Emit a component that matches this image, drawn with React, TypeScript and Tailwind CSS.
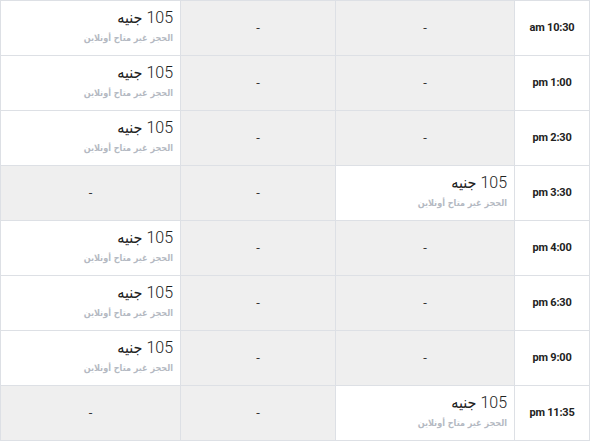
const rows: { time: string; avail: number }[] = [
  { time: 'am 10:30', avail: 0 },
  { time: 'pm 1:00', avail: 0 },
  { time: 'pm 2:30', avail: 0 },
  { time: 'pm 3:30', avail: 2 },
  { time: 'pm 4:00', avail: 0 },
  { time: 'pm 6:30', avail: 0 },
  { time: 'pm 9:00', avail: 0 },
  { time: 'pm 11:35', avail: 2 },
];

function PriceCell() {
  return (
    <td className="bg-white border border-[#dde0e5] align-top pt-[6px] pr-[7px] text-right">
      <div dir="rtl" className="text-[16px] leading-[22px] font-light text-[#222] [font-family:Roboto,'DejaVu_Sans_Condensed',sans-serif]">
        105 جنيه
      </div>
      <div dir="rtl" className="text-[9px] leading-[14px] mt-[2px] font-bold text-[#b4b9c2] [font-family:'DejaVu_Sans_Condensed',sans-serif]">
        الحجز غير متاح أونلاين
      </div>
    </td>
  );
}

function EmptyCell() {
  return (
    <td className="bg-[#efefef] border border-[#dde0e5] text-center align-middle text-[13px] text-[#333]">
      -
    </td>
  );
}

export default function App() {
  return (
    <div className="w-[590px] h-[444px] bg-white" style={{ fontFamily: 'Roboto, "DejaVu Sans", sans-serif' }}>
      <table className="border-collapse table-fixed w-[589px]">
        <colgroup>
          <col className="w-[180px]" />
          <col className="w-[155px]" />
          <col className="w-[179px]" />
          <col className="w-[75px]" />
        </colgroup>
        <tbody>
          {rows.map((r) => (
            <tr key={r.time} className="h-[55px]">
              {[0, 1, 2].map((i) => (r.avail === i ? <PriceCell key={i} /> : <EmptyCell key={i} />))}
              <td className="bg-white border border-[#dde0e5] text-center align-middle text-[11px] font-bold text-[#222] tracking-[-0.2px]">
                {r.time}
              </td>
            </tr>
          ))}
        </tbody>
      </table>
    </div>
  );
}
